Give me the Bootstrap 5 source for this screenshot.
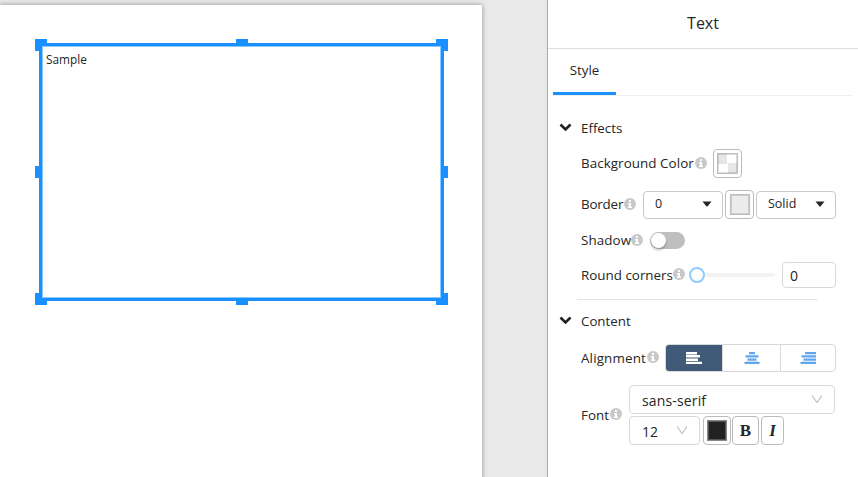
<!DOCTYPE html>
<html lang="en">
<head>
<meta charset="utf-8">
<title>Text</title>
<link href="https://cdn.jsdelivr.net/npm/bootstrap@5.3.0/dist/css/bootstrap.min.css" rel="stylesheet">
<style>
body{height:477px;font-family:"Open Sans","Noto Sans",sans-serif;font-size:13px;line-height:20px;color:#262626;background:#fff}
.stage{width:547px;background:#e9e9e9;padding-top:5px}
.sheet{width:482px;height:480px;background:#fff;box-shadow:0 0 5px rgba(0,0,0,.4);padding:38px 0 0 39px}
.frame{width:405px;height:258px;background:#1890ff}
.frame-body{z-index:1;left:0;top:0;width:405px;height:258px;background:#fff;border:3px solid #1890ff;box-shadow:inset 0 0 0 1px #8bc8ff;padding:3px 0 0 4px;font-size:11.8px;line-height:20px}
.grip{width:12px;height:12px;background:#1890ff}
.g-l{left:-4px}.g-c{left:197px}.g-r{right:-4px}.g-t{top:-4px}.g-m{top:123px}.g-b{bottom:-4px}
.panel{width:311px;border-left:1px solid #a9a9a9}
.panel-title{height:49px;border-bottom:1px solid #dedede;font-size:16px;line-height:46px}
.tabs{height:47px;margin:0 5px;border-bottom:1px solid #efefef}
.tab-on{width:63px;height:46px;border-bottom:3px solid #1890ff;line-height:43px;font-size:13.3px}
.sect{height:20px;padding-left:11px;font-size:13.3px}
.sect svg{width:13px;height:9px;margin:-1px 9px 0 0}
.line{padding-left:33px}
.info{width:12px;height:12px;flex:none;margin-top:-2px}
.lb-bg{width:114px;letter-spacing:.06px}.lb-bd{width:43px;letter-spacing:-.2px}.lb-sh{width:50px;letter-spacing:.1px}.lb-rc{width:92px}.lb-al{width:66px;letter-spacing:.15px}.lb-ft{width:29px}
.lb{flex:none;white-space:nowrap;font-size:13.4px;line-height:18px;padding-bottom:1px}
.field{border:1px solid #c9c9c9;border-radius:4px;background:#fff;flex:none}
.pick{width:80px;height:28px;padding:0 10px 2px 11px;font-size:12.5px}
.sw{width:29px;height:29px;padding:3px;border-color:#bbb}
.sw span{display:block;width:21px;height:21px;border:1px solid #bdbdbd;box-shadow:inset 0 0 0 1px rgba(0,0,0,.13)}
.checker{background:conic-gradient(#fff 25%,#e6e6e6 0 50%,#fff 0 75%,#e6e6e6 0)}
.grey{background:#ececec}
.sw .ink{background:#222;border-color:#888;box-shadow:inset 0 0 0 1px #555;width:20px}
.toggle{width:35px;height:17px;border-radius:9px;background:#bfbfbf;padding:1px}
.toggle span{display:block;width:15px;height:15px;border-radius:50%;background:#fff;box-shadow:0 2px 3px rgba(0,0,0,.25)}
.knob{width:16px;height:16px;border:2px solid #91caff;border-radius:50%;flex:none}
.rail{width:70px;height:4px;background:#f3f3f3;border-radius:2px;flex:none}
.num{width:54px;height:26px;border-color:#d9d9d9;padding-left:7px;font-size:14px;line-height:25px}
.rule{height:1px;background:#e6e6e6;width:241px;margin:11px 0 11px 29px}
.seg{width:171px;height:28px;border-color:#d9d9d9;overflow:hidden}
.seg div{display:flex;align-items:center;justify-content:center;border-left:1px solid #d9d9d9;width:58px;padding-bottom:1px;flex:none}
.seg div:first-child{background:#405a78;border:0;width:56px}
.seg div:last-child{width:55px}
.seg svg{width:16px;height:12px}
.fam,.size{border-color:#d9d9d9;padding:2px 11px 0 12px;font-size:14px;height:29px}
.fam{width:206px}.size{width:71px}
.fam svg,.size svg{width:12px;height:9px;margin-top:-2px}
.t-fam{letter-spacing:.15px}
.btn-f{height:29px;border-color:#bbb;font:700 17px/27px "Liberation Serif",serif;text-align:center}
</style>
</head>
<body class="d-flex overflow-hidden">
<main class="stage flex-shrink-0 overflow-hidden">
  <div class="sheet">
    <div class="frame position-relative">
      <i class="grip position-absolute g-l g-t"></i><i class="grip position-absolute g-c g-t"></i><i class="grip position-absolute g-r g-t"></i>
      <i class="grip position-absolute g-l g-m"></i><i class="grip position-absolute g-r g-m"></i>
      <i class="grip position-absolute g-l g-b"></i><i class="grip position-absolute g-c g-b"></i><i class="grip position-absolute g-r g-b"></i>
      <div class="frame-body position-absolute">Sample</div>
    </div>
  </div>
</main>
<svg width="0" height="0" class="position-absolute">
  <symbol id="info" viewBox="0 0 12 12"><circle cx="6" cy="6" r="6" fill="#c8c8c8"/><path fill="#fff" d="M5 2h2v2H5zM4 5h3v3.500h1V10H4V8.500h1v-2H4z"/></symbol>
  <symbol id="chev" viewBox="0 0 13 9"><path d="M1.500 1.500l5 5 5-5" fill="none" stroke="#222" stroke-width="2.600"/></symbol>
  <symbol id="thin" viewBox="0 0 12 9"><path d="M1 .5l5 7 5-7" fill="none" stroke="#bfbfbf" stroke-width="1.200"/></symbol>
  <symbol id="caret" viewBox="0 0 10 6"><path d="M.5.5h9L5.500 5.500h-1z" fill="#262626"/></symbol>
</svg>
<aside class="panel flex-shrink-0">
  <header class="panel-title text-center">Text</header>
  <nav class="tabs"><div class="tab-on text-center">Style</div></nav>
  <section>
    <div class="sect d-flex align-items-center" style="margin-top:22px"><svg><use href="#chev"/></svg>Effects</div>
    <div class="line d-flex align-items-center" style="margin-top:11px"><span class="lb lb-bg">Background Color</span><svg class="info"><use href="#info"/></svg><div class="field sw" style="margin-left:6px"><span class="checker"></span></div></div>
    <div class="line d-flex align-items-center" style="margin-top:12px"><span class="lb lb-bd">Border</span><svg class="info"><use href="#info"/></svg><div class="field pick d-flex align-items-center justify-content-between" style="margin:0 2px 0 7px">0<svg width="10" height="6"><use href="#caret"/></svg></div><div class="field sw" style="margin-right:2px;padding-left:4px"><span class="grey" style="width:20px"></span></div><div class="field pick d-flex align-items-center justify-content-between">Solid<svg width="10" height="6"><use href="#caret"/></svg></div></div>
    <div class="line d-flex align-items-center" style="margin-top:12px"><span class="lb lb-sh">Shadow</span><svg class="info"><use href="#info"/></svg><div class="toggle" style="margin-left:7px"><span></span></div></div>
    <div class="line d-flex align-items-center" style="margin-top:12px"><span class="lb lb-rc">Round corners</span><svg class="info"><use href="#info"/></svg><div class="knob" style="margin-left:4px"></div><div class="rail"></div><div class="field num" style="margin-left:7px">0</div></div>
    <div class="rule"></div>
  </section>
  <section>
    <div class="sect d-flex align-items-center"><svg><use href="#chev"/></svg>Content</div>
    <div class="line d-flex align-items-center" style="margin-top:13px"><span class="lb lb-al">Alignment</span><svg class="info"><use href="#info"/></svg>
      <div class="field seg d-flex" style="margin-left:6px">
        <div><svg viewBox="0 0 16 12"><path fill="#fff" d="M0 0h11v2.400H0zM0 3h14v2.400H0zM0 6.500h12v2.400H0zM0 9.700h16V12H0z"/></svg></div>
        <div><svg viewBox="0 0 16 12"><path fill="#60a5f0" d="M5 0h6v2.300H5zM1.500 3.200h13v2.300h-13zM3.500 6.500h9v2.200h-9zM.5 9.700h15V12H.5z"/></svg></div>
        <div><svg viewBox="0 0 16 12"><path fill="#60a5f0" d="M5 0h11v2.300H5zM1.500 3.200H16v2.300H1.500zM3.500 6.500H16v2.200H3.500zM.5 9.700H16V12H.5z"/></svg></div>
      </div>
    </div>
    <div class="line d-flex align-items-center" style="margin-top:13px"><span class="lb lb-ft">Font</span><svg class="info"><use href="#info"/></svg>
      <div class="d-flex flex-column" style="margin-left:7px;gap:2px">
        <div class="field fam d-flex align-items-center justify-content-between"><span class="t-fam">sans-serif</span><svg><use href="#thin"/></svg></div>
        <div class="d-flex"><div class="field size d-flex align-items-center justify-content-between">12<svg><use href="#thin"/></svg></div><div class="field sw" style="margin:0 1px 0 3px;width:28px"><span class="ink"></span></div><div class="field btn-f" style="width:27px;margin-right:2px">B</div><div class="field btn-f fst-italic" style="width:23px">I</div></div>
      </div>
    </div>
  </section>
</aside>
<script src="https://cdn.jsdelivr.net/npm/bootstrap@5.3.0/dist/js/bootstrap.bundle.min.js"></script>
</body>
</html>
